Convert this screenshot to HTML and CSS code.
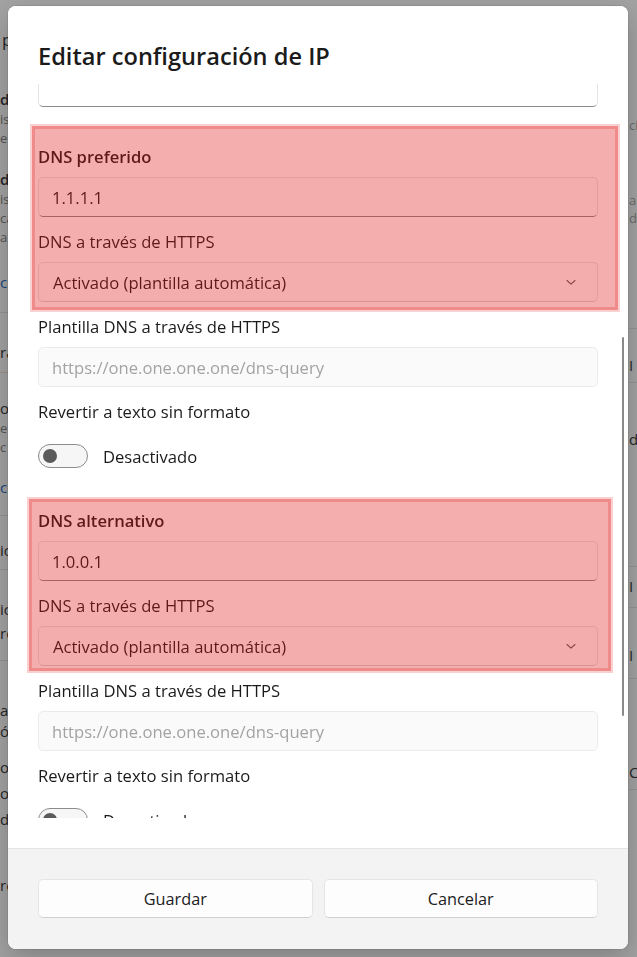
FILE: index.html
```html
<!DOCTYPE html>
<html lang="es">
<head>
<meta charset="utf-8">
<title>Editar configuración de IP</title>
<link rel="stylesheet" href="styles.css">
</head>
<body>
<div class="backdrop">
  <div class="bg-col bg-left">
    <div class="frag dark big r1">p</div>
    <div class="frag dark bold r2">d</div>
    <div class="frag grey r3">is</div>
    <div class="frag grey r4">e</div>
    <div class="frag dark bold r5">d</div>
    <div class="frag grey r3">is</div>
    <div class="frag grey r3">ca</div>
    <div class="frag grey r3">a</div>
    <div class="frag blue r6">ce</div>
    <div class="rule r7"></div>
    <div class="frag dark r8">ra</div>
    <div class="rule warm r9"></div>
    <div class="frag dark r10">or</div>
    <div class="frag grey r3">e</div>
    <div class="frag grey r3">c</div>
    <div class="frag blue r11">ce</div>
    <div class="rule r12"></div>
    <div class="frag dark r13">ic</div>
    <div class="rule r14"></div>
    <div class="frag dark r15">ic</div>
    <div class="frag dark r16">re</div>
    <div class="rule r17"></div>
    <div class="frag dark r18">ac</div>
    <div class="frag dark r19">ó</div>
    <div class="frag dark r20">or</div>
    <div class="frag dark r21">or</div>
    <div class="frag dark r22">de</div>
    <div class="frag dark r23">re</div>
  </div>
  <div class="bg-col bg-right">
    <div class="frag grey small s1">ci</div>
    <div class="frag grey small s2">ar</div>
    <div class="frag grey small s3">d</div>
    <div class="rule s4"></div>
    <div class="frag dark s5">I</div>
    <div class="rule s6"></div>
    <div class="frag dark s7">d</div>
    <div class="rule s8"></div>
    <div class="frag dark s9">I</div>
    <div class="rule s10"></div>
    <div class="frag dark s11">I</div>
    <div class="rule s12"></div>
    <div class="frag dark s13">C</div>
    <div class="rule s14"></div>
  </div>
</div>

<div class="dialog" role="dialog" aria-label="Editar configuración de IP">
  <div class="dlg-body">
    <h1 class="dlg-title">Editar configuración de IP</h1>
    <div class="scroll">
      <div class="scroll-content">
        <div class="textbox accent cut"></div>

        <section class="group first">
          <div class="label strong">DNS preferido</div>
          <div class="textbox accent">1.1.1.1</div>
          <div class="label">DNS a través de HTTPS</div>
          <div class="combo">
            <span>Activado (plantilla automática)</span>
            <svg class="chevron" viewBox="0 0 12 12" width="12" height="12"><path d="M2 4.5 L6 8.2 L10 4.5" fill="none" stroke="#5c5c5c" stroke-width="1.1" stroke-linecap="round" stroke-linejoin="round"/></svg>
          </div>
          <div class="label">Plantilla DNS a través de HTTPS</div>
          <div class="textbox disabled">https://one.one.one.one/dns-query</div>
          <div class="label">Revertir a texto sin formato</div>
          <div class="toggle-row">
            <span class="toggle"><span class="knob"></span></span>
            <span class="toggle-text">Desactivado</span>
          </div>
        </section>

        <section class="group second">
          <div class="label strong">DNS alternativo</div>
          <div class="textbox accent">1.0.0.1</div>
          <div class="label">DNS a través de HTTPS</div>
          <div class="combo">
            <span>Activado (plantilla automática)</span>
            <svg class="chevron" viewBox="0 0 12 12" width="12" height="12"><path d="M2 4.5 L6 8.2 L10 4.5" fill="none" stroke="#5c5c5c" stroke-width="1.1" stroke-linecap="round" stroke-linejoin="round"/></svg>
          </div>
          <div class="label">Plantilla DNS a través de HTTPS</div>
          <div class="textbox disabled">https://one.one.one.one/dns-query</div>
          <div class="label">Revertir a texto sin formato</div>
          <div class="toggle-row">
            <span class="toggle"><span class="knob"></span></span>
            <span class="toggle-text">Desactivado</span>
          </div>
        </section>
      </div>
    </div>
  </div>
  <div class="scrollbar"></div>
  <div class="dlg-footer">
    <button class="btn" type="button">Guardar</button>
    <button class="btn" type="button">Cancelar</button>
  </div>
</div>

<div class="highlight hl-1"></div>
<div class="highlight hl-2"></div>
</body>
</html>
```

FILE: styles.css
```css
* { box-sizing: border-box; }

html, body {
  margin: 0;
  padding: 0;
}

body {
  width: 637px;
  height: 957px;
  overflow: hidden;
  background: #a3a3a3;
  font-family: "Segoe UI", "Open Sans", "Noto Sans", sans-serif;
  color: #1b1b1b;
}

/* ---------- dimmed page behind the dialog ---------- */
.backdrop {
  display: flex;
  justify-content: space-between;
  height: 957px;
}

.bg-col {
  display: flex;
  flex-direction: column;
  overflow: hidden;
}

.bg-left { width: 30px; }
.bg-right { width: 9px; padding-left: 1px; }

.frag {
  font-size: 15px;
  line-height: 18px;
  white-space: nowrap;
}
.frag.dark { color: #262626; }
.frag.grey { color: #555; font-size: 13px; line-height: 16px; }
.frag.small { color: #6a6a6a; }
.frag.blue { color: #17457a; }
.frag.bold { font-weight: 600; }
.frag.big { font-size: 17px; padding-left: 2px; }

.rule { height: 1px; background: rgba(0, 0, 0, 0.09); }
.rule.warm { background: rgba(120, 70, 30, 0.15); }

.r1 { margin-top: 31px; }
.r2 { margin-top: 41px; }
.r3 { margin-top: 3px; }
.r4 { margin-top: 3px; }
.r5 { margin-top: 24px; }
.r6 { margin-top: 28px; }
.r7 { margin-top: 21px; }
.r8 { margin-top: 30px; }
.r9 { margin-top: 11px; }
.r10 { margin-top: 26px; }
.r11 { margin-top: 23px; }
.r12 { margin-top: 19px; }
.r13 { margin-top: 25px; }
.r14 { margin-top: 10px; }
.r15 { margin-top: 30px; }
.r16 { margin-top: 6px; }
.r17 { margin-top: 18px; }
.r18 { margin-top: 40px; }
.r19 { margin-top: 3px; }
.r20 { margin-top: 18px; }
.r21 { margin-top: 8px; }
.r22 { margin-top: 8px; }
.r23 { margin-top: 48px; }

.s1 { margin-top: 117px; }
.s2 { margin-top: 59px; }
.s3 { margin-top: 2px; }
.s4 { margin-top: 102px; }
.s5 { margin-top: 27px; }
.s6 { margin-top: 8px; }
.s7 { margin-top: 47px; }
.s8 { margin-top: 118px; }
.s9 { margin-top: 10px; }
.s10 { margin-top: 12px; }
.s11 { margin-top: 38px; }
.s12 { margin-top: 14px; }
.s13 { margin-top: 84px; }
.s14 { margin-top: 8px; }

/* ---------- dialog ---------- */
.dialog {
  position: fixed;
  left: 8px;
  top: 6px;
  width: 620px;
  height: 943px;
  border-radius: 8px;
  overflow: hidden;
  background: #fff;
  display: flex;
  flex-direction: column;
  box-shadow: 0 0 0 1px rgba(0, 0, 0, 0.08), 0 10px 30px rgba(0, 0, 0, 0.22);
}

.dlg-body {
  flex: 1;
  min-height: 0;
  display: flex;
  flex-direction: column;
  padding: 0 30px 30px;
  background: #fff;
}

.dlg-title {
  margin: 0 0 14px;
  padding-top: 36px;
  font-size: 23.6px;
  line-height: 28px;
  font-weight: 600;
  color: #1b1b1b;
  white-space: nowrap;
}

.scroll {
  flex: 1;
  min-height: 0;
  overflow: hidden;
}

.scroll-content {
  margin-top: -17px;
}

.label {
  font-size: 16.6px;
  line-height: 20px;
  margin-bottom: 10px;
  color: #1b1b1b;
}
.label.strong { font-weight: 600; }

.textbox,
.combo {
  height: 40px;
  border: 1px solid #e5e5e5;
  border-radius: 5px;
  background: #fdfdfd;
  display: flex;
  align-items: center;
  padding-left: 13px;
  font-size: 16.6px;
  color: #1b1b1b;
  margin-bottom: 15px;
}

.textbox.accent {
  border-bottom: 1px solid #8a8a8a;
}

.textbox.cut {
  margin-bottom: 0;
  background: #fff;
}

.textbox.disabled {
  color: #a3a3a3;
  background: #fafafa;
  border-color: #ebebeb;
}

.combo {
  justify-content: space-between;
  padding-left: 14px;
  padding-right: 20px;
  border-bottom-color: #d6d6d6;
}

.chevron { display: block; }

.group.first { margin-top: 40px; }
.group.second { margin-top: 31px; }

.toggle-row {
  height: 48px;
  display: flex;
  align-items: center;
  gap: 15px;
  font-size: 16.6px;
}

.toggle {
  width: 50px;
  height: 24px;
  border: 1px solid #8b8b8b;
  border-radius: 12px;
  background: #f6f6f6;
  display: flex;
  align-items: center;
  padding-left: 4px;
}

.knob {
  width: 14px;
  height: 14px;
  border-radius: 50%;
  background: #5b5b5b;
}

.scrollbar {
  position: absolute;
  left: 614px;
  top: 331px;
  width: 2px;
  height: 379px;
  border-radius: 1px;
  background: #8a8a8a;
}

.dlg-footer {
  border-top: 1px solid #e5e5e5;
  background: #f3f3f3;
  padding: 30px 30px 31px;
  display: flex;
  gap: 11px;
}

.btn {
  flex: 1;
  height: 39px;
  border: 1px solid #e5e5e5;
  border-bottom-color: #d0d0d0;
  border-radius: 5px;
  background: #fdfdfd;
  font-family: inherit;
  font-size: 16.3px;
  color: #1b1b1b;
}

/* ---------- annotation highlights ---------- */
.highlight {
  position: fixed;
  border: 3px solid rgba(226, 24, 24, 0.5);
  background: rgba(226, 24, 24, 0.35);
  background-clip: padding-box;
  box-shadow: 0 0 0 2px rgba(226, 24, 24, 0.2);
}

.hl-1 { left: 32px; top: 126px; width: 586px; height: 184px; }
.hl-2 { left: 29px; top: 499px; width: 582px; height: 172px; }
```
